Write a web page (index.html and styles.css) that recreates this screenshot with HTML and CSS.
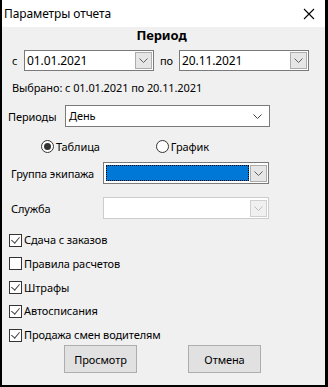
FILE: index.html
```html
<!DOCTYPE html>
<html lang="ru">
<head>
<meta charset="utf-8">
<title>Параметры отчета</title>
<link rel="stylesheet" href="styles.css">
</head>
<body>
<div class="window">
  <div class="titlebar">
    <span class="title">Параметры отчета</span>
    <svg class="close" width="12" height="12" viewBox="0 0 12 12"><path d="M1 1 L11 11 M11 1 L1 11" stroke="#000" stroke-width="1.1" fill="none"/></svg>
  </div>
  <div class="content">
    <div class="heading">Период</div>
    <div class="row dates">
      <span class="lbl lbl-c">с</span>
      <div class="combo date">
        <span class="val">01.01.2021</span>
        <span class="btn"><svg width="9" height="5" viewBox="0 0 9 5"><path d="M0.5 0.5 L4.5 4.5 L8.5 0.5" stroke="#606060" fill="none"/></svg></span>
      </div>
      <span class="lbl lbl-po">по</span>
      <div class="combo date">
        <span class="val">20.11.2021</span>
        <span class="btn"><svg width="9" height="5" viewBox="0 0 9 5"><path d="M0.5 0.5 L4.5 4.5 L8.5 0.5" stroke="#606060" fill="none"/></svg></span>
      </div>
    </div>
    <div class="selected">Выбрано: с 01.01.2021 по 20.11.2021</div>
    <div class="row periods">
      <span class="lbl lbl-periods">Периоды</span>
      <div class="combo plain">
        <span class="val">День</span>
        <span class="arrow"><svg width="9" height="5" viewBox="0 0 9 5"><path d="M0.5 0.5 L4.5 4.5 L8.5 0.5" stroke="#404040" fill="none"/></svg></span>
      </div>
    </div>
    <div class="row radios">
      <label class="radio r1"><span class="circle checked"></span>Таблица</label>
      <label class="radio r2"><span class="circle"></span>График</label>
    </div>
    <div class="row group">
      <span class="lbl lbl-wide">Группа экипажа</span>
      <div class="combo wide">
        <span class="sel"></span>
        <span class="btn"><svg width="9" height="5" viewBox="0 0 9 5"><path d="M0.5 0.5 L4.5 4.5 L8.5 0.5" stroke="#606060" fill="none"/></svg></span>
      </div>
    </div>
    <div class="row service">
      <span class="lbl lbl-wide">Служба</span>
      <div class="combo wide disabled">
        <span class="sel"></span>
        <span class="btn"><svg width="9" height="5" viewBox="0 0 9 5"><path d="M0.5 0.5 L4.5 4.5 L8.5 0.5" stroke="#bcbcbc" fill="none"/></svg></span>
      </div>
    </div>
    <div class="checks">
      <label class="check"><span class="box on"></span>Сдача с заказов</label>
      <label class="check"><span class="box"></span>Правила расчетов</label>
      <label class="check"><span class="box on"></span>Штрафы</label>
      <label class="check"><span class="box on"></span>Автосписания</label>
      <label class="check"><span class="box on"></span>Продажа смен водителям</label>
    </div>
    <div class="buttons">
      <button class="button b1">Просмотр</button>
      <button class="button b2">Отмена</button>
    </div>
  </div>
</div>
</body>
</html>
```
FILE: styles.css
```css
* { box-sizing: border-box; }
html, body { margin: 0; padding: 0; }
body {
  width: 328px;
  height: 387px;
  overflow: hidden;
  background: #000;
  font-family: "Noto Sans", "Open Sans", sans-serif;
  font-size: 11px;
  letter-spacing: -0.1px;
  color: #000;
}
.window {
  width: 328px;
  height: 387px;
  border-left: 2px solid #000;
  border-right: 3px solid #000;
  border-bottom: 2px solid #000;
  background: #f0f0f0;
  display: flex;
  flex-direction: column;
}
.titlebar {
  height: 27px;
  background: #fff;
  display: flex;
  align-items: center;
  padding-left: 2px;
  flex: none;
  font-size: 12px;
}
.title { flex: 1; line-height: 16px; }
.close { margin-right: 10px; }
.content { flex: 1; display: flex; flex-direction: column; }
.heading {
  text-align: center;
  font-weight: bold;
  font-size: 13px;
  line-height: 16px;
  padding-right: 4px;
}
.row { display: flex; align-items: center; }
.lbl { flex: none; white-space: nowrap; }
.dates { margin-top: 7px; height: 21px; padding-left: 10px; }
.lbl-c { width: 12px; }
.lbl-po { width: 25px; padding-left: 6px; }
.combo {
  flex: none;
  background: #fff;
  border: 1px solid #7a7a7a;
  display: flex;
  align-items: center;
  height: 100%;
}
.combo.date { width: 130px; }
.combo .val { flex: 1; padding-left: 2px; line-height: 16px; font-size: 12px; }
.combo.plain .val { font-size: 11px; padding-left: 3px; }
.combo .btn {
  width: 17px;
  height: 17px;
  margin-right: 1px;
  background: #e6e6e6;
  border: 1px solid #adadad;
  display: flex;
  align-items: center;
  justify-content: center;
}
.selected { margin-top: 9px; line-height: 16px; padding-left: 10px; }
.periods { margin-top: 9px; height: 22px; padding-left: 6px; }
.lbl-periods { width: 57px; }
.combo.plain { width: 205px; }
.combo .arrow { width: 20px; display: flex; justify-content: center; padding-right: 4px; }
.radios { margin-top: 11px; height: 16px; }
.radio { display: flex; align-items: center; white-space: nowrap; }
.r1 { margin-left: 39px; }
.r2 { margin-left: 56px; }
.circle {
  width: 13px;
  height: 13px;
  border: 1px solid #333;
  border-radius: 50%;
  background: #fff;
  margin-right: 2px;
  display: flex;
  align-items: center;
  justify-content: center;
}
.circle.checked::after {
  content: "";
  width: 7px;
  height: 7px;
  border-radius: 50%;
  background: #333;
}
.group { margin-top: 8px; height: 22px; padding-left: 9px; }
.service { margin-top: 13px; height: 22px; padding-left: 9px; }
.lbl-wide { width: 92px; }
.combo.wide { width: 166px; }
.combo .sel {
  flex: 1;
  height: 16px;
  margin: 0 1px 0 2px;
}
.group .sel {
  background: #0078d7;
  outline: 1px dotted #000;
  outline-offset: -1px;
}
.combo.disabled { border-color: #cccccc; }
.combo.disabled .btn { background: #f0f0f0; border-color: #d0d0d0; }
.checks {
  margin-top: 13px;
  padding-left: 7px;
  display: flex;
  flex-direction: column;
  gap: 7.75px;
}
.check { display: flex; align-items: center; height: 16px; line-height: 16px; white-space: nowrap; }
.box {
  flex: none;
  width: 13px;
  height: 13px;
  border: 1px solid #333;
  background: #fff;
  margin-right: 2px;
  position: relative;
}
.box.on::after {
  content: "";
  position: absolute;
  left: 3px;
  top: 0px;
  width: 4px;
  height: 7px;
  border-right: 1px solid #444;
  border-bottom: 1px solid #444;
  transform: rotate(40deg);
}
.buttons { margin-top: 2px; display: flex; padding-left: 62px; gap: 51px; }
.button {
  width: 73px;
  height: 28px;
  background: #e1e1e1;
  border: 1px solid #adadad;
  font-family: inherit;
  font-size: 11px;
  letter-spacing: -0.1px;
  color: #000;
  padding: 0;
}
```
